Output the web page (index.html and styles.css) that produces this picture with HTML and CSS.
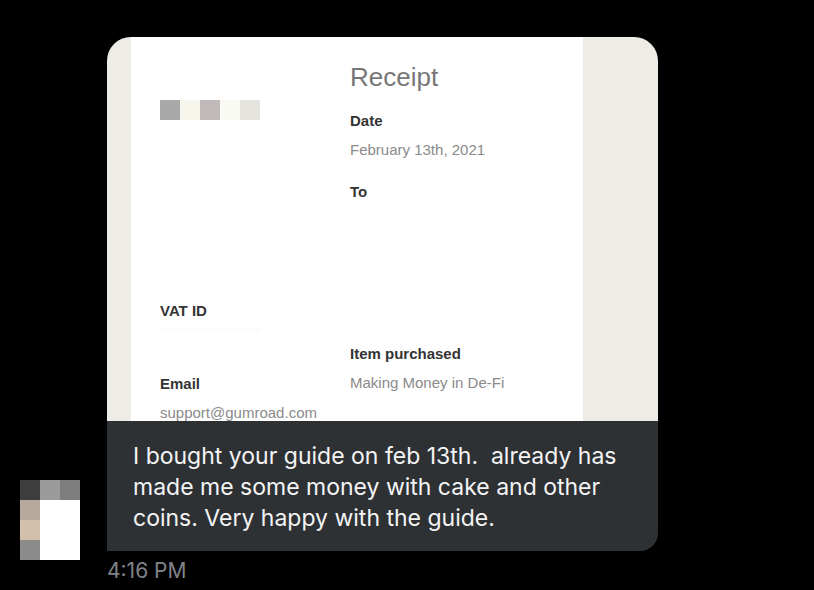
FILE: index.html
```html
<!DOCTYPE html>
<html lang="en">
  <head>
    <meta charset="UTF-8">
    <title>Message</title>
    <link rel="stylesheet" href="styles.css">
  </head>
  <body>
    <div class="chat-row">

      <div class="avatar">
        <span style="background:#3d3d3d"></span><span style="background:#9b9b9b"></span><span style="background:#7e7e7e"></span>
        <span style="background:#b5a99c"></span><span></span><span></span>
        <span style="background:#d4c0aa"></span><span></span><span></span>
        <span style="background:#8b8b8b"></span><span></span><span></span>
      </div>

      <div class="message">
        <div class="bubble">

          <div class="shot">
            <div class="receipt">
              <div class="col-left">
                <div class="logo">
                  <span style="background:#a9a9a9"></span>
                  <span style="background:#f6f6ec"></span>
                  <span style="background:#c1b9b9"></span>
                  <span style="background:#fafaf4"></span>
                  <span style="background:#e5e3de"></span>
                </div>
                <div class="label vat">VAT ID</div>
                <div class="faint">&nbsp;</div>
                <div class="label email">Email</div>
                <div class="value">support@gumroad.com</div>
              </div>
              <div class="col-right">
                <div class="title">Receipt</div>
                <div class="label date">Date</div>
                <div class="value">February 13th, 2021</div>
                <div class="label to">To</div>
                <div class="label item">Item purchased</div>
                <div class="value">Making Money in De-Fi</div>
              </div>
            </div>
          </div>

          <div class="text">
            I bought your guide on feb 13th.&nbsp; already has made me some money with cake and other coins. Very happy with the guide.
          </div>
        </div>
        <div class="time">4:16 PM</div>
      </div>

    </div>
  </body>
</html>
```

FILE: styles.css
```css
body {
  margin: 0;
  background: #000;
  height: 590px;
  overflow: hidden;
}

.chat-row {
  display: flex;
  align-items: flex-end;
  gap: 27px;
  padding: 37px 0 0 20px;
}

.avatar {
  display: grid;
  grid-template-columns: repeat(3, 20px);
  grid-auto-rows: 20px;
  margin-bottom: 22px;
}
.avatar span {
  background: #fff;
}

.message {
  width: 551px;
}

.bubble {
  border-radius: 24px 24px 18px 0;
  overflow: hidden;
  background: #2e3134;
}

.shot {
  height: 384px;
  background: #edece6;
  padding-left: 24px;
  overflow: hidden;
}

.receipt {
  width: 452px;
  height: 100%;
  background: #fff;
  display: flex;
  font-family: "Liberation Sans", Arial, sans-serif;
  font-size: 15px;
  line-height: 20px;
}

.col-left {
  width: 190px;
  padding: 63px 0 0 29px;
}
.col-right {
  padding-top: 25px;
}

.logo {
  display: flex;
  height: 20px;
}
.logo span {
  width: 20px;
}

.title {
  font-size: 26px;
  line-height: 30px;
  color: #777;
}

.label {
  font-weight: bold;
  color: #333;
}
.value {
  color: #8a8a8a;
  margin-top: 9px;
}

.faint {
  height: 4px;
  width: 100px;
  margin-top: 7px;
  background: #fcfcfc;
}

.vat { margin-top: 181px; }
.email { margin-top: 42px; }
.date { margin-top: 19px; }
.to { margin-top: 22px; }
.item { margin-top: 142px; }

.text {
  padding: 20px 26px 17px 26px;
  color: #f4f4f4;
  font-family: Inter, "Open Sans", sans-serif;
  font-size: 23px;
  line-height: 31px;
}

.time {
  margin-top: 9px;
  font-family: Inter, "Open Sans", sans-serif;
  font-size: 21px;
  line-height: 22px;
  color: #808489;
}
```
